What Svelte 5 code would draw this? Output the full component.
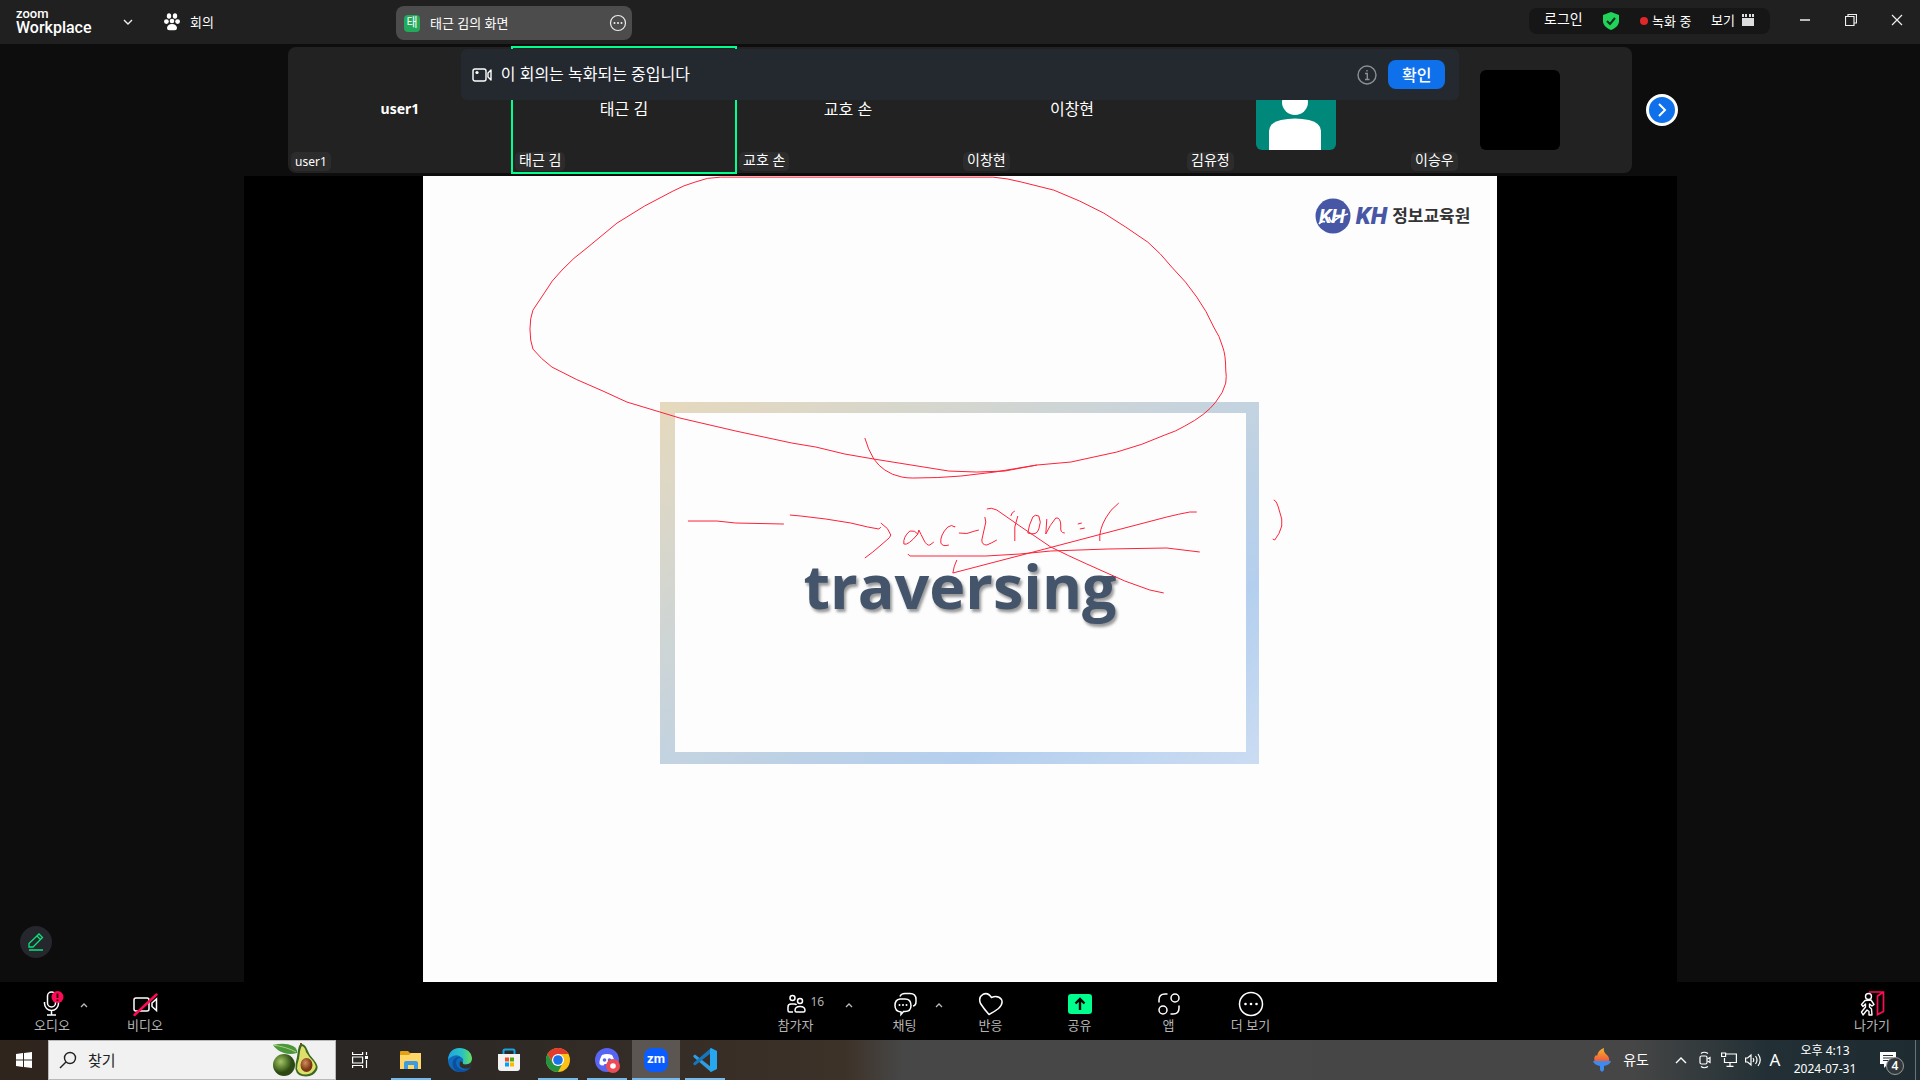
<script>
  const tiles = [
    { name: 'user1', label: 'user1', latin: true },
    { name: '태근 김', label: '태근 김', active: true },
    { name: '교호 손', label: '교호 손' },
    { name: '이창현', label: '이창현' },
    { avatar: 'person', label: '김유정' },
    { avatar: 'blank', label: '이승우' }
  ];

  const strokes = [
    'M742 177L720 177Q706 177 694 182Q683 185 672 191Q643 205 616 223L587 247Q572 258 561 270Q550 281 544 292L532 310Q529 318 529 329Q529 341 532 349Q540 359 551 367Q575 380 602 391L626 402L679 418L735 431L791 443L815 447L844 454L873 459L948 471Q976 473 1004 471L1036 465L1070 462L1116 452Q1142 445 1164 435Q1176 431 1184 426Q1205 415 1215 402Q1223 392 1225 383Q1226 376 1225 370Q1225 355 1222 347Q1219 336 1213 327Q1206 311 1196 297Q1186 282 1171 267Q1160 253 1147 242L1125 227Q1104 212 1079 201L1053 190L1021 182Q1006 178 992 177Z',
    'M864 438Q867 449 873 459Q878 466 884 470Q891 475 901 477Q906 478 912 478Q938 478 960 476L994 472L1036 465',
    'M687 521L716 521L735 523L783 524',
    'M789 515L800 516L825 519L850 523L867 527L878 529L880 527',
    'M880 523Q888 528 890 535Q889 538 886 540L872 552L864 558',
    'M917 534Q914 530 909 531Q902 537 903 544Q907 546 917 534L918 530Q920 534 923 540Q926 546 929 545L933 542',
    'M954 526L954 527Q951 524 947 527Q939 535 940 543Q942 547 948 545',
    'M958 533Q966 535 974 531L978 530M984 517L985 522L981 540Q981 545 986 545Q991 543 996 540',
    'M986 509Q990 507 996 510L1019 526L1050 547Q1068 556 1086 564L1124 581L1149 590L1163 593',
    'M1017 516L1014 527L1014 541M1010 516Q1011 512 1014 511',
    'M1032 517Q1028 525 1027 533Q1036 536 1038 529Q1041 522 1038 516Q1034 514 1032 517',
    'M1046 519L1045 534Q1049 525 1055 518Q1060 517 1060 526Q1059 533 1064 533',
    'M1077 524L1081 523M1079 529L1084 528',
    'M1118 503Q1109 510 1105 518Q1098 530 1099 541',
    'M1196 512L1189 512Q1178 514 1166 517L1101 534L1044 549L952 573Q953 566 956 560',
    'M907 554L909 556L956 556L985 556L1019 554L1050 551L1107 549L1166 548L1199 552',
    'M1273 500Q1276 500 1279 512Q1282 519 1281 526Q1279 534 1274 540L1272 539'
  ];

  const apps = [
    { id: 'explorer', name: '파일 탐색기', open: true },
    { id: 'edge', name: 'Edge' },
    { id: 'store', name: 'Store' },
    { id: 'chrome', name: 'Chrome', open: true },
    { id: 'discord', name: 'Discord', open: true },
    { id: 'zoom', name: 'Zoom', open: true, active: true },
    { id: 'code', name: 'VS Code', open: true }
  ];
</script>

<div class="desktop">
  <header class="titlebar">
    <div class="brand"><span class="brand-top">zoom</span><span class="brand-name">Workplace</span></div>
    <button class="drop" aria-label="Workplace 메뉴">
      <svg width="10" height="6" viewBox="0 0 10 6"><path d="M1 1l4 4 4-4" fill="none" stroke="#eee" stroke-width="1.4" /></svg>
    </button>
    <button class="meeting">
      <svg width="16" height="18" viewBox="0 0 16 18" fill="#fff">
        <ellipse cx="5" cy="3" rx="2.2" ry="2.7" /><ellipse cx="11" cy="3" rx="2.2" ry="2.7" />
        <circle cx="2.4" cy="8.6" r="2.4" /><circle cx="13.6" cy="8.6" r="2.4" /><circle cx="8" cy="8" r="2.3" />
        <path d="M8 11c3 0 5 2 5 4 0 2-1.500 2.300-5 2.300s-5-.3-5-2.300c0-2 2-4 5-4z" />
      </svg>
      <span>회의</span>
    </button>
    <button class="share-tab">
      <span class="share-badge">태</span>
      <span class="share-name">태근 김의 화면</span>
      <svg width="18" height="18" viewBox="0 0 18 18"><circle cx="9" cy="9" r="7.500" fill="none" stroke="#eee" stroke-width="1.200" /><g fill="#eee"><circle cx="5.500" cy="9" r="1" /><circle cx="9" cy="9" r="1" /><circle cx="12.500" cy="9" r="1" /></g></svg>
    </button>
    <div class="status">
      <button class="login">로그인</button>
      <svg class="shield" width="18" height="18" viewBox="0 0 18 18"><path d="M9 0l8 3v6c0 4-3 7-8 9-5-2-8-5-8-9V3z" fill="#22d35a" /><path d="M5 9l3 3 5-6" fill="none" stroke="#12301c" stroke-width="2" /></svg>
      <span class="rec"><i></i>녹화 중</span>
      <button class="view">보기
        <svg width="12" height="12" viewBox="0 0 12 12" fill="#ddd"><path d="M0 0h2v3H0zM3 0h2v3H3zM7 0h2v3H7zM10 0h2v3h-2zM0 4h12v8H0z" /></svg>
      </button>
    </div>
    <div class="window-buttons">
      <button aria-label="최소화"><svg width="12" height="12" viewBox="0 0 12 12"><path d="M1 6h10" stroke="#bbb" stroke-width="2" /></svg></button>
      <button aria-label="이전 크기로"><svg width="12" height="12" viewBox="0 0 12 12" fill="none" stroke="#eee"><path d="M.5 2.500h8.500v9H.5zM3 2V.5h8.500v8.500H9.500" stroke-width="1.200" /></svg></button>
      <button aria-label="닫기"><svg width="12" height="12" viewBox="0 0 12 12"><path d="M1 1l10 10M11 1L1 11" stroke="#eee" stroke-width="1.200" /></svg></button>
    </div>
  </header>

  <section class="gallery">
    <div class="tiles">
      {#each tiles as tile}
        <article class="tile" class:active={tile.active}>
          {#if tile.name}
            <strong class:latin={tile.latin}>{tile.name}</strong>
          {:else if tile.avatar === 'person'}
            <svg class="avatar" width="80" height="80" viewBox="0 0 80 80"><rect width="80" height="80" rx="6" fill="#00897b" /><circle cx="39" cy="32" r="13" fill="#fff" /><path d="M13 80V61q0-8 12-11 14-3 28 0 12 3 12 11v19z" fill="#fff" /></svg>
          {:else}
            <div class="avatar blank"></div>
          {/if}
          <span class="chip" class:latin={tile.latin}>{tile.label}</span>
        </article>
      {/each}
    </div>
    <button class="next" aria-label="다음">
      <svg width="10" height="16" viewBox="0 0 10 16"><path d="M2 2l6 6-6 6" fill="none" stroke="#fff" stroke-width="2" /></svg>
    </button>
    <div class="banner" role="status">
      <svg width="20" height="16" viewBox="0 0 20 16" fill="none" stroke="#fff" stroke-width="1.400"><rect x="1" y="2" width="13" height="12" rx="2" /><path d="M16 6l3-3v10l-3-3z" stroke-linejoin="round" /><circle cx="5" cy="5.500" r="1.600" fill="#fff" stroke="none" /></svg>
      <p>이 회의는 녹화되는 중입니다</p>
      <svg width="20" height="20" viewBox="0 0 20 20" fill="none" stroke="#8b8f95" stroke-width="1.400"><circle cx="10" cy="10" r="9" /><path d="M8 8.500h2.300V14M8 14.500h4.500M10 5v1.600" /></svg>
      <button class="confirm">확인</button>
    </div>
  </section>

  <main class="stage">
    <div class="shared">
      <div class="slide">
        <div class="logo">
          <svg width="36" height="36" viewBox="0 0 36 36">
            <circle cx="18" cy="18" r="17.500" fill="#4757a5" />
            <text x="17" y="25" text-anchor="middle" class="mark">KH</text>
            <path d="M4 26Q7 22 10 24M14 19Q15 26 20 22T33 16" fill="none" stroke="#fff" stroke-width="1.800" />
          </svg>
          <b>KH</b><span>정보교육원</span>
        </div>
        <div class="frame"><div class="panel"><h1>traversing</h1></div></div>
        <svg class="ink" viewBox="422 176 1075 806" aria-hidden="true">
          {#each strokes as d}<path {d} />{/each}
        </svg>
      </div>
    </div>
    <button class="pen" aria-label="주석">
      <svg width="16" height="18" viewBox="0 0 16 18" fill="none" stroke="#0ee07d" stroke-width="1.300"><path d="M1 14v-3.500L11 1l3.500 3.500L5 14zM9 3l3.500 3.500M1 17h14" /></svg>
    </button>
  </main>

  <footer class="controls">
    <div class="group left">
      <button class="tool">
        <svg width="24" height="26" viewBox="0 0 24 26" fill="none" stroke="#fff" stroke-width="1.500"><rect x="7.500" y="1" width="8" height="15" rx="4" /><path d="M4.500 11v1.500a7 7 0 0014 0V11M11.500 19.500V24M7 24h9" /><circle cx="17.500" cy="6" r="6" fill="#ff0a54" stroke="none" /><path d="M17.500 2.500v4.500M17.500 8.500v1.500" stroke="#22000b" stroke-width="1.800" /></svg>
        <span>오디오</span>
      </button>
      <button class="caret audio" aria-label="오디오 옵션"><svg width="8" height="5" viewBox="0 0 8 5"><path d="M1 4l3-3 3 3" fill="none" stroke="#bbb" stroke-width="1.300" /></svg></button>
      <button class="tool">
        <svg width="26" height="26" viewBox="0 0 26 26" fill="none" stroke="#fff" stroke-width="1.500"><rect x="2" y="7" width="15" height="13" rx="2" /><path d="M20 12l4.500-4v11.500L20 15.500z" /><path d="M2.500 24L24.500 3.500" stroke="#ff0a54" stroke-width="2.400" stroke-linecap="round" /></svg>
        <span>비디오</span>
      </button>
    </div>
    <div class="group center">
      <button class="tool people">
        <svg width="22" height="24" viewBox="0 0 22 24" fill="none" stroke="#fff" stroke-width="1.500"><circle cx="7.500" cy="6" r="2.500" /><circle cx="15" cy="9" r="2.500" /><path d="M8 20H4.500Q3 20 3 18.500V15q0-3 3-3h3q2 0 2.500 1M11.500 20h7q1.500 0 1.500-1.500 0-4-5-4t-5 4q0 1.500 1.500 1.500z" /></svg>
        <em>16</em>
        <span>참가자</span>
      </button>
      <button class="caret" aria-label="참가자 옵션"><svg width="8" height="5" viewBox="0 0 8 5"><path d="M1 4l3-3 3 3" fill="none" stroke="#bbb" stroke-width="1.300" /></svg></button>
      <button class="tool chat">
        <svg width="24" height="24" viewBox="0 0 24 24" fill="none" stroke="#fff" stroke-width="1.500"><path d="M7 7h5q6 0 6 6.500 0 6-6 6h-1.500L8 22.500V20q-6-.5-6-6.500T7 7z" /><path d="M7 4.500Q8 1.500 12 1.500h5q6 0 6 6v2q0 4-3 4.500" /><g fill="#fff" stroke="none"><circle cx="6.500" cy="13" r="1" /><circle cx="10" cy="13" r="1" /><circle cx="13.500" cy="13" r="1" /></g></svg>
        <span>채팅</span>
      </button>
      <button class="caret small" aria-label="채팅 옵션"><svg width="8" height="5" viewBox="0 0 8 5"><path d="M1 4l3-3 3 3" fill="none" stroke="#bbb" stroke-width="1.300" /></svg></button>
      <button class="tool">
        <svg width="26" height="24" viewBox="0 0 26 24" fill="none" stroke="#fff" stroke-width="1.500"><path d="M11 22.500Q6 17 2.500 11.500 0 5 5 2.300 10 0 13.500 5.500 20 3 23.500 7.500 25.500 12 20.500 16.500 16 20 11 22.500z" stroke-linejoin="round" /></svg>
        <span>반응</span>
      </button>
      <button class="tool">
        <svg width="24" height="24" viewBox="0 0 24 24"><rect y="2" width="24" height="20" rx="3" fill="#00ff8c" /><path d="M12 18V7M7.500 11.500L12 7l4.500 4.500" fill="none" stroke="#000" stroke-width="2.400" /></svg>
        <span>공유</span>
      </button>
      <button class="tool">
        <svg width="24" height="24" viewBox="0 0 24 24" fill="none" stroke="#fff" stroke-width="1.500"><circle cx="18" cy="6" r="4" /><circle cx="6" cy="18" r="4" /><path d="M10.500 2H8Q2 2 2 8v2.500M13.500 22H16q6 0 6-6v-2.500" /></svg>
        <span>앱</span>
      </button>
      <button class="tool">
        <svg width="26" height="26" viewBox="0 0 26 26"><circle cx="13" cy="13" r="11.500" fill="none" stroke="#fff" stroke-width="1.500" /><g fill="#fff"><circle cx="7.500" cy="13" r="1.300" /><circle cx="13" cy="13" r="1.300" /><circle cx="18.500" cy="13" r="1.300" /></g></svg>
        <span>더 보기</span>
      </button>
    </div>
    <div class="group right">
      <button class="tool">
        <svg width="26" height="26" viewBox="0 0 26 26" fill="none"><path d="M10 1h14.500v19.500l-6 3V5l6-4" stroke="#ff0a54" stroke-width="1.700" /><g stroke="#fff" stroke-width="1.400" stroke-linejoin="round"><circle cx="9.500" cy="5.500" r="3" fill="#000" /><path d="M6 9.500l-3.500 4 1.500 2 2.500-2.500v3L2.500 21 4 24l4-5 2 1.500V24h3l-.5-6-2-2v-3l2.500 2 2-1.500-3-4.500z" /></g></svg>
        <span>나가기</span>
      </button>
    </div>
  </footer>

  <nav class="taskbar">
    <button class="start" aria-label="시작">
      <svg width="16" height="16" viewBox="0 0 16 16" fill="#fff"><path d="M0 2l7-1v6.500H0zM8 1l8-1v7.500H8zM0 8.500h7V15l-7-1zM8 8.500h8V16l-8-1z" /></svg>
    </button>
    <label class="search">
      <svg width="18" height="18" viewBox="0 0 18 18" fill="none" stroke="#222" stroke-width="1.400"><circle cx="11" cy="7" r="5.500" /><path d="M7 11l-6 6" /></svg>
      <input type="text" placeholder="찾기" aria-label="찾기" />
      <svg width="46" height="34" viewBox="0 0 46 34">
        <defs>
          <radialGradient id="skin" cx=".35" cy=".35"><stop offset="0" stop-color="#a8c26c" /><stop offset=".5" stop-color="#668b37" /><stop offset="1" stop-color="#2d4a15" /></radialGradient>
          <radialGradient id="seed" cx=".4" cy=".35"><stop offset="0" stop-color="#d18c5c" /><stop offset="1" stop-color="#7b3713" /></radialGradient>
        </defs>
        <circle cx="11" cy="22" r="11" fill="url(#skin)" />
        <path d="M0 2q12-3 20 1 5 3 4 7-7 2-13 0Q3 7 0 2z" fill="#4d963b" /><path d="M0 2q14 2 23 7" stroke="#a5d27e" fill="none" />
        <path d="M28 1q4 0 6 5 2 6 7 11 5 6 3 10-3 6-11 6.500-9 0-10.500-7Q22 21 24 14l1-7q1-6 3-6z" fill="#3c6a1e" />
        <path d="M29 3q3 1 4 6 3 5 7 9 4 5 2 8-3 5-9 5.500-8 0-9-6 0-4 2-10l1-7q1-5 2-5.500z" fill="#dfe06b" />
        <ellipse cx="33.500" cy="22" rx="6" ry="7" fill="url(#seed)" /><path d="M28 2V0" stroke="#7b4a22" stroke-width="2" />
      </svg>
    </label>
    <button class="task-view" aria-label="작업 보기">
      <svg width="16" height="16" viewBox="0 0 16 16" fill="none" stroke="#fff" stroke-width="1.200"><path d="M.6 0v2.500h10V0M.6 16v-2.500h10V16M.6 5h10v6H.6zM14.500 0v3M14.500 8v8" /><path d="M13 4h3v3h-3z" fill="#fff" stroke="none" /></svg>
    </button>
    <div class="apps">
      {#each apps as app}
        <button class="app" class:open={app.open} class:current={app.active} aria-label={app.name}>
          {#if app.id === 'explorer'}
            <svg width="24" height="24" viewBox="0 0 24 24"><path d="M1 4q0-1 1-1h7l2 2h10q1 0 1 1v3H1z" fill="#e3a116" /><path d="M1 7h9l2-2h10v16H1z" fill="#ffd667" /><path d="M5 21v-6q0-2 2-2h10q2 0 2 2v6h-4v-4H9v4z" fill="#3d9be0" /></svg>
          {:else if app.id === 'edge'}
            <svg width="24" height="24" viewBox="0 0 24 24">
              <defs><linearGradient id="wave"><stop offset="0" stop-color="#20a5e4" /><stop offset=".6" stop-color="#2bc3c0" /><stop offset="1" stop-color="#6bdf55" /></linearGradient></defs>
              <circle cx="12" cy="12" r="12" fill="#0f6cbd" />
              <path d="M0 12Q1 0 12 0q11 1 12 10 0 6-6 6.500-4 0-3.500-2 2-3-1-5Q9 5.500 3 9 1 10 0 12z" fill="url(#wave)" />
              <path d="M13 9q-5 1-5 6 1 6 8 7 3 0 6-3l1 .5Q19 24.500 12 24q-5-.5-7-5-2-7 4-10z" fill="#0d4f9e" />
              <path d="M15 14.500q-1 2 3 2 5-.5 6-4.500l1 5-3.500 3q-6 2-9-1-2-3 0-6z" fill="#342e29" />
            </svg>
          {:else if app.id === 'store'}
            <svg width="24" height="24" viewBox="0 0 24 24"><path d="M6.500 7V3q0-1.500 1.500-1.500h8q1.500 0 1.500 1.500v4" fill="none" stroke="#16a6e5" stroke-width="2" /><path d="M1 6h22v14q0 3-3 3H4q-3 0-3-3z" fill="#f2f2f2" /><path d="M8 9.500h4v4H8z" fill="#f25022" /><path d="M13 9.500h4v4h-4z" fill="#57a80c" /><path d="M8 14.500h4v4H8z" fill="#00a4ef" /><path d="M13 14.500h4v4h-4z" fill="#ffb900" /></svg>
          {:else if app.id === 'chrome'}
            <svg width="24" height="24" viewBox="0 0 24 24"><circle cx="12" cy="12" r="12" fill="#fbc116" /><path d="M1.600 6A12 12 0 0122.400 6H12L7 15z" fill="#e33b2e" /><path d="M1.600 6l5.200 9L12 18l4.500-2.500L12 24A12 12 0 011.600 6z" fill="#229342" /><circle cx="12" cy="12" r="6" fill="#fff" /><circle cx="12" cy="12" r="4.800" fill="#1a73e8" /></svg>
          {:else if app.id === 'discord'}
            <svg width="26" height="26" viewBox="0 0 26 26"><circle cx="13" cy="13" r="12" fill="#5865f2" /><path d="M8 8q5-2 10 0 3 5 2.500 9-2 2-4 1.500l-1-1.500h-5l-1 1.500q-2 .5-4-1.500Q5 13 8 8z" fill="#fff" /><circle cx="10.500" cy="13" r="1.800" fill="#5865f2" /><circle cx="15.500" cy="13" r="1.800" fill="#5865f2" /><circle cx="19" cy="19" r="7" fill="#ed4c55" /><circle cx="19" cy="19" r="2.800" fill="#fff" /></svg>
          {:else if app.id === 'zoom'}
            <span class="zm">zm</span>
          {:else}
            <svg width="24" height="24" viewBox="0 0 24 24"><path d="M0 8l2-1.500L18 19v5L1 9.500z" fill="#2f9de2" /><path d="M0 16l2 1.500L18 5V0L1 14.500z" fill="#1477bd" /><path d="M18 0l6 3v18l-6 3-1-1V1z" fill="#27a7ef" /></svg>
          {/if}
        </button>
      {/each}
    </div>
    <div class="tray">
      <button class="news">
        <svg width="18" height="24" viewBox="0 0 18 24"><defs><linearGradient id="flame" x2="0" y2="1"><stop offset="0" stop-color="#f7b52c" /><stop offset="1" stop-color="#f0523f" /></linearGradient></defs><path d="M2 14Q0 10 3 7l1 1Q5 2 11 0q-1 4 3 7 3 3 2 7z" fill="url(#flame)" /><path d="M0 13h18q-1 4-7 5v4l-2 2-2-2v-4q-6-1-7-5z" fill="#3c8cf0" /></svg>
        <span>유도</span>
      </button>
      <button aria-label="숨겨진 아이콘"><svg width="12" height="8" viewBox="0 0 12 8"><path d="M1 7l5-5 5 5" fill="none" stroke="#fff" stroke-width="1.400" /></svg></button>
      <button aria-label="카메라"><svg width="12" height="18" viewBox="0 0 12 18" fill="none" stroke="#fff" stroke-width="1.200"><rect x="1" y="5" width="7" height="8" rx="1.500" /><path d="M8.500 8l2.500-1.500v5L8.500 10M2 2.500Q5 0 9 2.500M2 15.500Q5 18 9 15.500" /></svg></button>
      <button aria-label="네트워크"><svg width="16" height="16" viewBox="0 0 16 16" fill="none" stroke="#fff" stroke-width="1.200"><path d="M5 2h10.400v8.500H3.500V6M9 11v3M5.500 14.400h7M.6 1h4v3.500h-4z" /></svg></button>
      <button aria-label="볼륨"><svg width="16" height="16" viewBox="0 0 16 16" fill="none" stroke="#fff" stroke-width="1.200"><path d="M.6 6h2L6 3v10L2.600 10h-2zM8 6q1.500 2 0 4M10.500 4q3 4 0 8M13 2q4.500 6 0 12" /></svg></button>
      <button class="ime">A</button>
      <time datetime="2024-07-31T16:13"><span>오후 4:13</span><span>2024-07-31</span></time>
      <button class="notify" aria-label="알림 4개">
        <svg width="16" height="16" viewBox="0 0 16 16"><path d="M0 0h16v12H8l-4 4v-4H0z" fill="#fff" /><path d="M3 3.500h10M3 6h10M3 8.500h6" stroke="#26323a" /></svg>
        <span class="count">4</span>
      </button>
      <i class="edge-line"></i>
    </div>
  </nav>
</div>

<style>
  :global(body) { margin: 0; background: #0d0d0d; }
  * { box-sizing: border-box; }
  button { border: 0; padding: 0; background: none; color: inherit; font: inherit; display: flex; align-items: center; justify-content: center; }
  svg { display: block; flex: none; }
  .desktop { min-height: 100vh; display: flex; flex-direction: column; color: #fff; font: 13px/16px "Noto Sans", "Noto Sans CJK KR", sans-serif; }

  .titlebar { height: 44px; display: flex; align-items: center; background: #202020; padding-left: 16px; }
  .brand { display: flex; flex-direction: column; width: 100px; font-family: Roboto, sans-serif; font-weight: 500; }
  .brand-top { font-size: 13px; line-height: 12px; }
  .brand-name { font-size: 16px; line-height: 16px; }
  .drop { width: 24px; height: 24px; }
  .meeting { margin-left: 24px; gap: 10px; }
  .share-tab { margin-left: 182px; width: 236px; height: 34px; border-radius: 8px; background: #4c4c4c; padding: 0 5px 0 8px; gap: 10px; margin-top: 2px; }
  .share-badge { width: 16px; height: 17px; border-radius: 4px; background: #23a95c; font-size: 12px; text-align: center; }
  .share-name { flex: 1; text-align: left; }
  .status { margin-left: auto; height: 26px; width: 241px; border-radius: 8px; background: #161616; display: flex; align-items: center; padding: 0 16px 0 15px; justify-content: space-between; margin-bottom: 2px; }
  .login { font-size: 14px; padding-bottom: 4px; }
  .rec { display: flex; align-items: center; gap: 4px; }
  .rec i { width: 8px; height: 8px; border-radius: 50%; background: #e02828; }
  .view { gap: 7px; padding-bottom: 2px; }
  .window-buttons { display: flex; margin-left: 12px; padding-bottom: 4px; }
  .window-buttons button { width: 46px; height: 40px; }

  .gallery { position: relative; height: 132px; padding: 3px 15% 0; display: flex; align-items: flex-start; background: #0d0d0d; }
  .tiles { flex: 1; height: 126px; display: grid; grid-template-columns: repeat(6, 1fr); background: #222; border-radius: 8px; }
  .tile { position: relative; display: flex; align-items: center; justify-content: center; }
  .tile strong { font-size: 16px; line-height: 20px; font-weight: 400; padding-bottom: 2px; }
  .tile strong.latin { font-size: 14px; font-weight: 700; }
  .active { margin: -1px; border: 2px solid #00ff8c; }
  .chip { position: absolute; left: 3px; bottom: 2px; height: 19px; padding: 0 4px; border-radius: 5px; background: #2c2c2c; font-size: 14px; line-height: 16px; }
  .active .chip { left: 2px; bottom: 1px; }
  .chip.latin { font-size: 12px; line-height: 19px; }
  .blank { width: 80px; height: 80px; border-radius: 6px; background: #000; }
  .next { position: absolute; left: calc(85% + 14px); top: 50px; width: 32px; height: 32px; border: 3px solid #fff; border-radius: 50%; background: #0e71eb; }
  .banner { position: absolute; left: 24%; right: 24%; top: 5px; height: 51px; border-radius: 6px; background: #242930; display: flex; align-items: center; padding: 0 14px 0 11px; }
  .banner p { margin: 0 auto 0 9px; padding-bottom: 2px; font-size: 16px; line-height: 20px; }
  .confirm { margin-left: 11px; width: 57px; height: 29px; border-radius: 8px; background: #0e71eb; font-size: 16px; font-weight: 500; }

  .stage { position: relative; flex: 1; display: flex; justify-content: center; background: #0d0d0d; }
  .shared { width: 1433px; max-width: 100%; background: #000; display: flex; justify-content: center; }
  .slide { position: relative; aspect-ratio: 4 / 3; height: calc(100vh - 274px); background: #fdfdfd; display: flex; flex-direction: column; align-items: center; }
  .logo { align-self: flex-end; display: flex; align-items: center; gap: 5px; height: 36px; margin: 22px 27px 0 0; color: #333; font-size: 17px; font-weight: 700; line-height: 24px; }
  .logo b { color: #4757a5; font: italic 900 24px/24px Roboto, sans-serif; }
  .mark { font: italic 700 20px Roboto, sans-serif; fill: #fff; }
  .frame { margin: 168px 2px 0 0; width: 599px; max-width: 90%; height: 362px; padding: 11px 13px 12px 15px; background: linear-gradient(to bottom right, #e6d9bd, #c4d3df 48%, #b4cfee 75%, #cbdcf2); display: flex; }
  .panel { flex: 1; background: #fdfdfd; display: flex; align-items: center; justify-content: center; }
  h1 { margin: 0; padding-top: 6px; color: #44546a; font: 700 61px/64px "Open Sans", sans-serif; text-shadow: 2px 3px 3px rgba(0, 0, 0, .4); }
  .ink { position: absolute; inset: 0; width: 100%; height: 100%; fill: none; stroke: #ff2038; stroke-width: 1; }
  .pen { position: absolute; left: 20px; bottom: 24px; width: 32px; height: 32px; border-radius: 50%; background: #25272c; }

  .controls { height: 58px; background: #000; display: flex; justify-content: space-between; color: #b4b4b4; }
  .group { display: flex; align-items: stretch; }
  .left { width: 210px; padding-left: 16px; }
  .right { width: 84px; }
  .tool { width: 72px; flex-direction: column; position: relative; justify-content: flex-start; padding-top: 9px; }
  .tool svg { height: 26px; }
  .tool em { position: absolute; left: 51px; top: 12px; font-style: normal; font-size: 12px; }
  .caret { width: 34px; height: 46px; }
  .caret.audio { width: 20px; margin-left: -14px; margin-right: 15px; }
  .chat { width: 48px; margin-left: 15px; }
  .caret.small { width: 20px; }
  .center .caret + .tool:not(.chat) { margin-left: 6px; }
  .center .tool:nth-child(n + 6) { margin-left: 17px; }
  .center .tool:last-child { margin-left: 10px; }

  .taskbar { height: 40px; display: flex; background: linear-gradient(90deg, #30251d, #2a2725 20%, #382e26 38%, #3d3228 44%, #474747 47%, #464646 85%, #223035 92%, #1e2c32); }
  .start { width: 48px; }
  .search { width: 288px; background: #f1f1f1; border: 1px solid #b9b9b9; display: flex; align-items: center; padding: 0 16px 0 10px; }
  .search input { flex: 1; min-width: 0; border: 0; background: none; outline: 0; padding: 0 0 0 11px; font: 15px/20px "Noto Sans", "Noto Sans CJK KR", sans-serif; color: #222; }
  .search input::placeholder { color: #222; opacity: 1; }
  .task-view { width: 48px; }
  .apps { display: flex; gap: 1px; padding-left: 3px; }
  .app { width: 48px; position: relative; }
  .open::after { content: ""; position: absolute; left: 4px; right: 4px; bottom: 0; height: 2px; background: #76b9ed; }
  .current { background: #5b5651; }
  .current::after { left: 0; right: 0; }
  .zm { width: 24px; height: 24px; border-radius: 8px; background: #0b5cff; font: 700 13px/22px Roboto, sans-serif; text-align: center; }
  .tray { margin-left: auto; display: flex; align-items: center; }
  .tray button { width: 24px; height: 40px; }
  .tray .news { width: auto; gap: 12px; margin-right: 20px; font-size: 14px; }
  .tray .ime { width: 20px; font-size: 17px; }
  time { width: 80px; display: flex; flex-direction: column; font-size: 12px; line-height: 18px; text-align: center; }
  .tray .notify { width: 50px; position: relative; padding-right: 4px; }
  .count { position: absolute; left: 21px; top: 17px; width: 18px; height: 18px; border: 1px solid #999; border-radius: 50%; background: #30383c; font-size: 12px; line-height: 16px; font-weight: 600; }
  .edge-line { width: 5px; height: 40px; border-left: 1px solid #68747a; }
</style>
